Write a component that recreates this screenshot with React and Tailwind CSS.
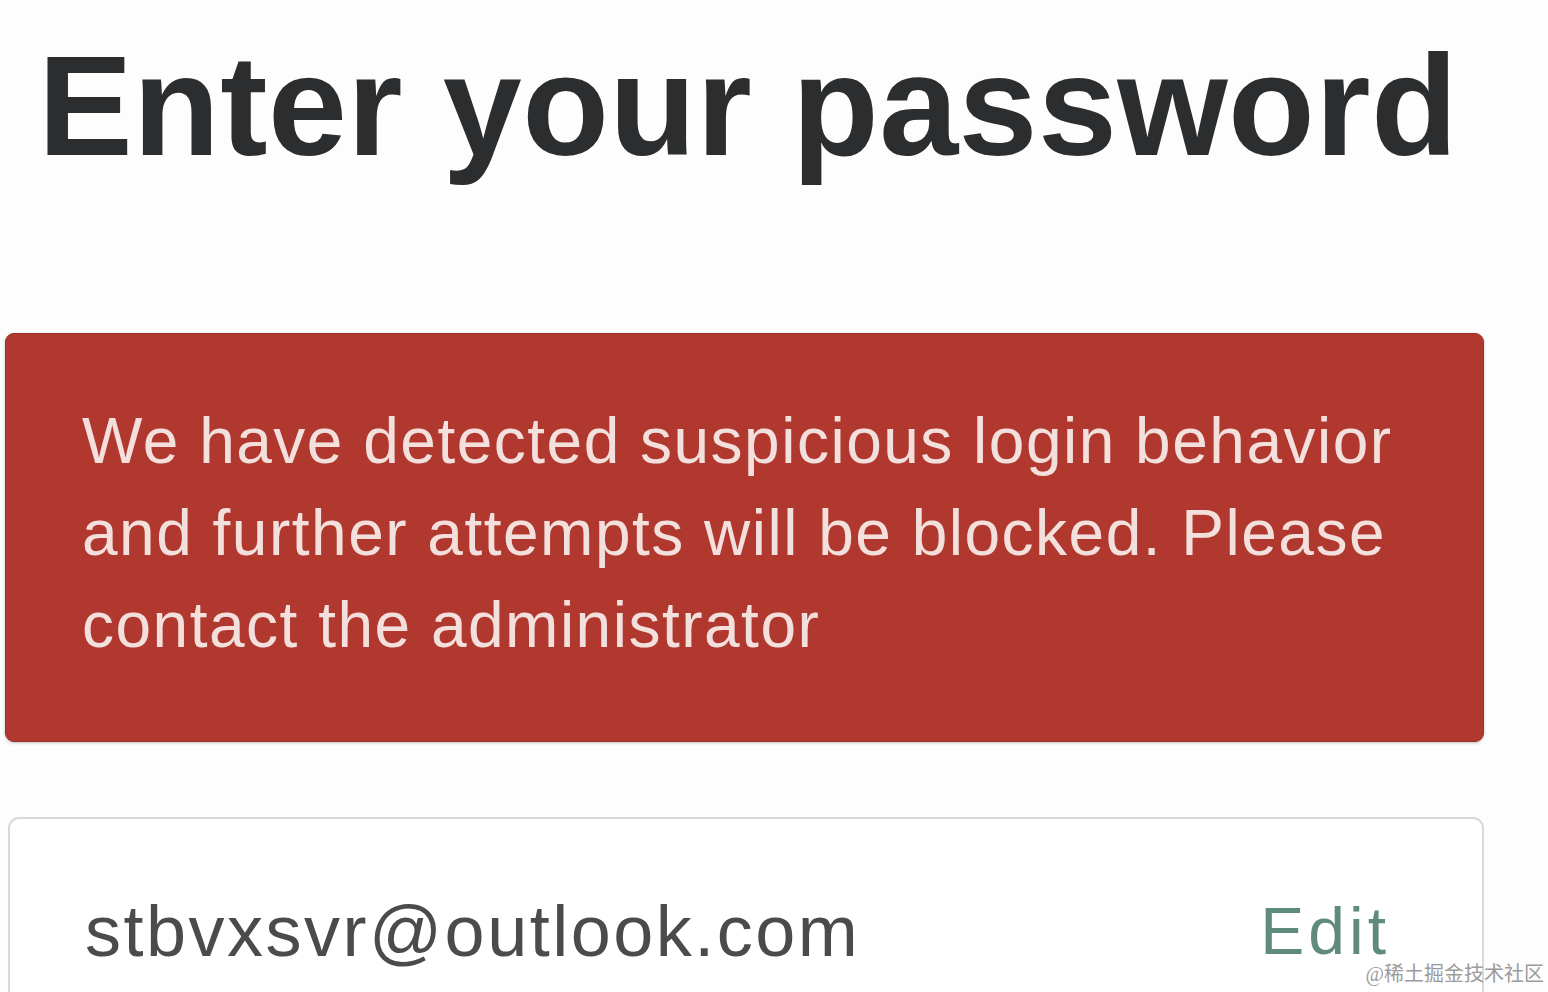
export default function App() {
  return (
    <div className="relative h-[992px] w-[1548px] overflow-hidden bg-[#fdfdfd] font-['Liberation_Sans',Arial,sans-serif]">
      {/* Heading */}
      <h1 className="pl-[38px] pt-[35px] text-[142px] font-bold leading-[142px] tracking-[0.4px] text-[#2b2d2f]">
        Enter your password
      </h1>

      {/* Error banner */}
      <div className="ml-[5px] mt-[156px] w-[1479px] rounded-[9px] border border-[#9c2f28] bg-[#b1382f] pb-[70px] pl-[76px] pt-[61px] shadow-[0_1px_3px_rgba(0,0,0,0.25)]">
        <p className="whitespace-nowrap text-[64px] leading-[92px] tracking-[1.5px] text-[#f3e0dc]">
          We have detected suspicious login behavior
          <br />
          and further attempts will be blocked. Please
          <br />
          contact the administrator
        </p>
      </div>

      {/* Email field */}
      <div className="ml-[8px] mt-[75px] flex h-[260px] w-[1476px] items-start justify-between rounded-[11px] border-2 border-[#d9d9d9] bg-white pl-[75px] pr-[92px] pt-[72px]">
        <span className="text-[72px] leading-[80px] tracking-[2.5px] text-[#4b4b4b]">
          stbvxsvr@outlook.com
        </span>
        <span className="text-[66px] leading-[80px] tracking-[4px] text-[#5e8b7c]">Edit</span>
      </div>

      {/* Watermark */}
      <span className="absolute bottom-[8px] right-[4px] font-['Liberation_Serif','Noto_Sans_CJK_SC',serif] text-[20px] leading-none text-[#9b9b9b]">
        @稀土掘金技术社区
      </span>
    </div>
  )
}
